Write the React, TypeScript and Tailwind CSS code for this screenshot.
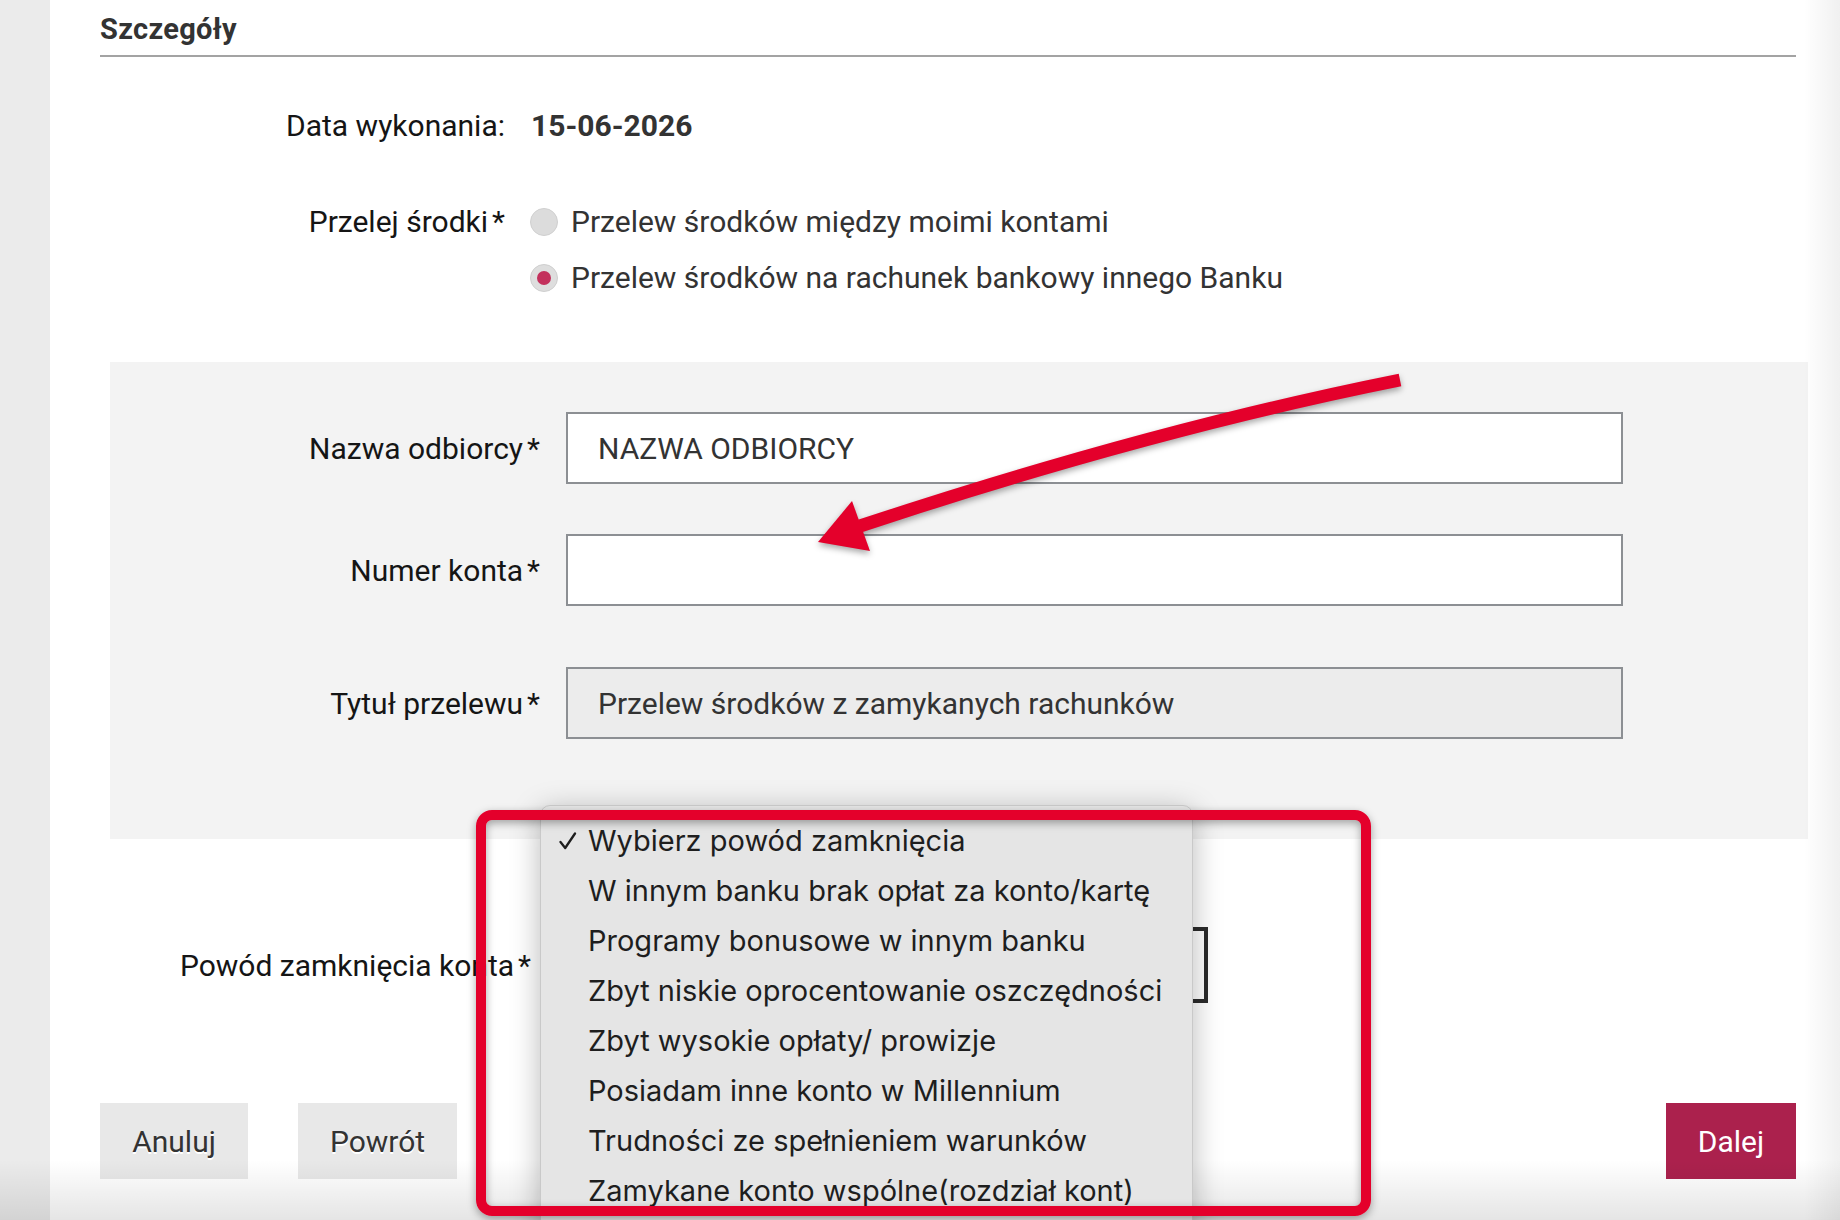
import React from "react";

const reasons = [
  "Wybierz powód zamknięcia",
  "W innym banku brak opłat za konto/kartę",
  "Programy bonusowe w innym banku",
  "Zbyt niskie oprocentowanie oszczędności",
  "Zbyt wysokie opłaty/ prowizje",
  "Posiadam inne konto w Millennium",
  "Trudności ze spełnieniem warunków",
  "Zamykane konto wspólne(rozdział kont)",
];

function Req({ children }: { children: React.ReactNode }) {
  return (
    <>
      {children}
      <span className="ml-[4px]">*</span>
    </>
  );
}

export default function App() {
  return (
    <div className="relative flex h-[1220px] w-[1840px] overflow-hidden bg-white font-['Roboto',sans-serif] text-[30px] text-[#151515]">
      <div className="w-[50px] shrink-0 bg-[#ebebeb]" />
      <main className="flex-1 pl-[50px] pr-[44px]">
        <div className="h-[57px] border-b-2 border-[#a3a3a3] pt-[14px]">
          <h2 className="text-[29px] font-bold leading-[30px] tracking-[0.3px] text-[#333]">Szczegóły</h2>
        </div>

        <div className="mt-[49px] flex h-[40px] items-center leading-[40px]">
          <div className="w-[405px] text-right">Data wykonania:</div>
          <div className="ml-[26px] font-bold text-[#333]">15-06-2026</div>
        </div>

        <div className="mt-[56px] flex leading-[40px]">
          <div className="w-[405px] text-right">
            <Req>Przelej środki</Req>
          </div>
          <div className="ml-[25px] flex flex-col gap-[16px] text-[#333]">
            <div className="flex h-[40px] items-center">
              <span className="h-[28px] w-[28px] rounded-full border border-[#d0d0d0] bg-[#dcdcdc]" />
              <span className="ml-[13px]">Przelew środków między moimi kontami</span>
            </div>
            <div className="flex h-[40px] items-center">
              <span className="flex h-[28px] w-[28px] items-center justify-center rounded-full border border-[#cfcfcf] bg-[#dedede]">
                <span className="h-[14px] w-[14px] rounded-full bg-[#c3305c]" />
              </span>
              <span className="ml-[13px]">Przelew środków na rachunek bankowy innego Banku</span>
            </div>
          </div>
        </div>

        <section className="mt-[64px] ml-[10px] mr-[-12px] bg-[#f3f3f3] pt-[50px] pb-[100px]">
          <div className="flex items-center">
            <div className="w-[430px] text-right">
              <Req>Nazwa odbiorcy</Req>
            </div>
            <div className="ml-[26px] flex h-[72px] w-[1057px] items-center border-2 border-[#8c8f93] bg-white px-[30px] text-[#333]">
              NAZWA ODBIORCY
            </div>
          </div>
          <div className="mt-[50px] flex items-center">
            <div className="w-[430px] text-right">
              <Req>Numer konta</Req>
            </div>
            <div className="ml-[26px] h-[72px] w-[1057px] border-2 border-[#8c8f93] bg-white" />
          </div>
          <div className="mt-[61px] flex items-center">
            <div className="w-[430px] text-right">
              <Req>Tytuł przelewu</Req>
            </div>
            <div className="ml-[26px] flex h-[72px] w-[1057px] items-center border-2 border-[#8c8f93] bg-[#ececec] px-[30px] text-[#333]">
              Przelew środków z zamykanych rachunków
            </div>
          </div>
        </section>

        <div className="mt-[88px] flex h-[76px] items-center">
          <div className="w-[431px] text-right">
            <Req>Powód zamknięcia konta</Req>
          </div>
          <div className="ml-[35px] h-[76px] w-[642px] border-4 border-[#2b2b2b] bg-white" />
        </div>

        <div className="mt-[100px] flex text-[#333]">
          <button className="flex h-[76px] w-[148px] items-center justify-center bg-[#e8e8e8] [text-shadow:0_2px_0_#fff]">
            Anuluj
          </button>
          <button className="ml-[50px] flex h-[76px] w-[159px] items-center justify-center bg-[#e8e8e8] [text-shadow:0_2px_0_#fff]">
            Powrót
          </button>
          <button className="ml-auto flex h-[76px] w-[130px] items-center justify-center bg-[#ab214d] text-white">
            Dalej
          </button>
        </div>
      </main>

      {/* window-edge vignettes */}
      <div className="pointer-events-none absolute bottom-0 left-0 right-0 h-[60px] bg-gradient-to-b from-transparent to-[rgba(0,0,0,0.1)]" />
      <div className="pointer-events-none absolute bottom-0 right-0 top-0 w-[36px] bg-gradient-to-r from-transparent to-[rgba(0,0,0,0.06)]" />

      {/* native dropdown */}
      <div className="absolute left-[540px] top-[805px] h-[440px] w-[653px] rounded-t-[10px] border border-[#c9c9c9] bg-[#e5e5e5] pt-[10px] font-['Inter',sans-serif] text-[29px] text-[#1e1e1e] shadow-[0_6px_30px_rgba(0,0,0,0.28)]">
        {reasons.map((r, i) => (
          <div key={r} className="relative flex h-[50px] items-center pl-[47px]">
            {i === 0 && (
              <svg className="absolute left-[18px] top-[16px]" width="18" height="18" viewBox="0 0 18 18">
                <path d="M1.5 10 L6.2 16 L16 1.5" fill="none" stroke="#1e1e1e" strokeWidth="2.3" strokeLinecap="round" strokeLinejoin="round" />
              </svg>
            )}
            {r}
          </div>
        ))}
      </div>

      {/* red annotation arrow */}
      <svg className="pointer-events-none absolute left-0 top-0 [filter:drop-shadow(0_3px_3px_rgba(0,0,0,0.35))]" width="1840" height="1220" viewBox="0 0 1840 1220">
        <path d="M1400 380 Q1150 430 860 526" fill="none" stroke="#e4002b" strokeWidth="13" />
        <polygon points="818,542 852,501 870,551" fill="#e4002b" />
      </svg>

      {/* red annotation box */}
      <div className="pointer-events-none absolute left-[476px] top-[810px] h-[406px] w-[895px] rounded-[16px] border-[10px] border-[#e4002b] shadow-[0_3px_8px_rgba(0,0,0,0.35),inset_0_3px_8px_rgba(0,0,0,0.35)]" />
    </div>
  );
}
